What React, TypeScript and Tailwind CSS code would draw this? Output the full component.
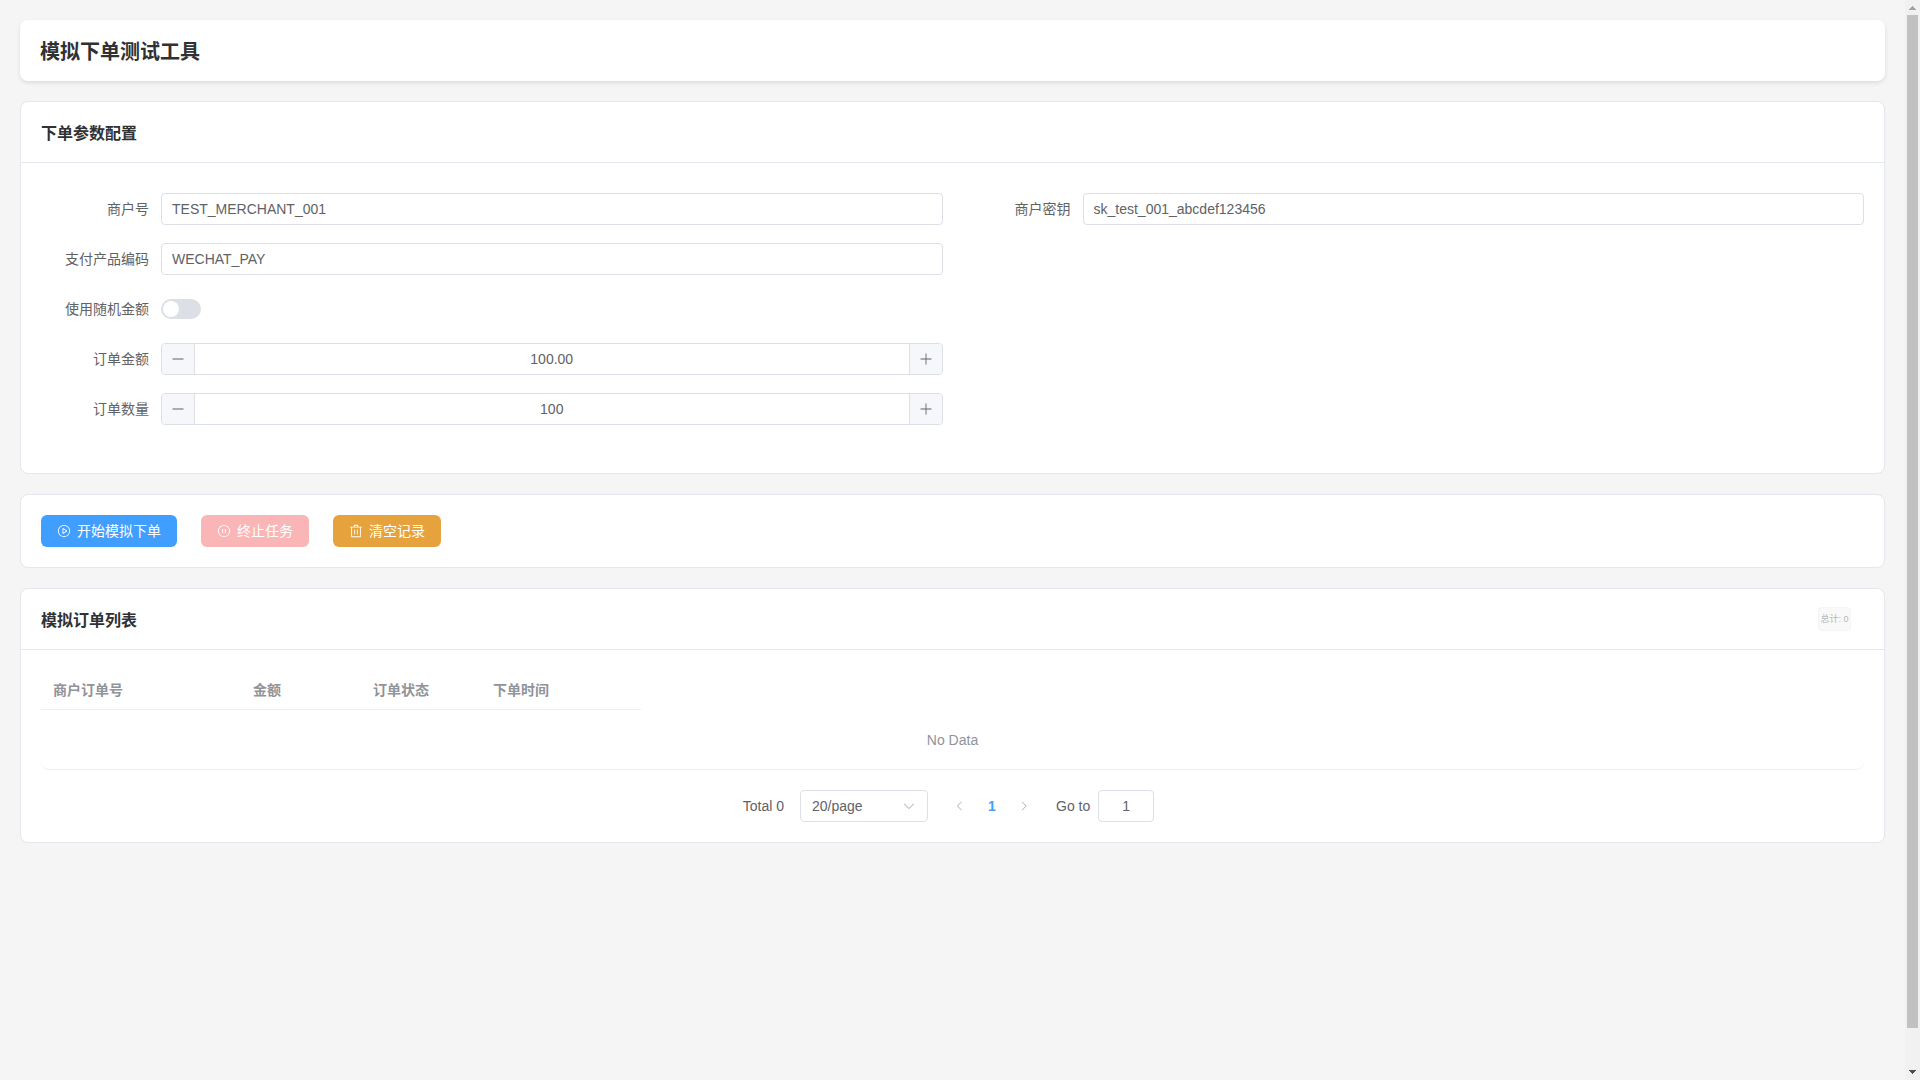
import { useState, type ReactNode } from "react";

const card = "rounded-lg border border-[#e4e7ed] bg-white";

function Icon({ children, className = "size-[14px]" }: { children: ReactNode; className?: string }) {
  return (
    <svg viewBox="0 0 1024 1024" fill="currentColor" className={className} aria-hidden="true">
      {children}
    </svg>
  );
}

const MinusIcon = () => (
  <Icon><path d="M128 544h768a32 32 0 1 0 0-64H128a32 32 0 0 0 0 64" /></Icon>
);
const PlusIcon = () => (
  <Icon><path d="M480 480V128a32 32 0 0 1 64 0v352h352a32 32 0 1 1 0 64H544v352a32 32 0 1 1-64 0V544H128a32 32 0 0 1 0-64z" /></Icon>
);
const PlayIcon = () => (
  <Icon><path d="M512 64a448 448 0 1 1 0 896 448 448 0 0 1 0-896m0 832a384 384 0 0 0 0-768 384 384 0 0 0 0 768m-48-247.616L668.608 512 464 375.616zm10.624-342.656 249.472 166.336a48 48 0 0 1 0 79.872L474.624 718.272A48 48 0 0 1 400 678.336V345.6a48 48 0 0 1 74.624-39.936z" /></Icon>
);
const PauseIcon = () => (
  <Icon><path d="M512 64a448 448 0 1 1 0 896 448 448 0 0 1 0-896m0 832a384 384 0 0 0 0-768 384 384 0 0 0 0 768m-96-544q32 0 32 32v256q0 32-32 32t-32-32V384q0-32 32-32m192 0q32 0 32 32v256q0 32-32 32t-32-32V384q0-32 32-32" /></Icon>
);
const DeleteIcon = () => (
  <Icon><path d="M160 256H96a32 32 0 0 1 0-64h256V95.936a32 32 0 0 1 32-32h256a32 32 0 0 1 32 32V192h256a32 32 0 1 1 0 64h-64v672a32 32 0 0 1-32 32H192a32 32 0 0 1-32-32zm448-64v-64H416v64zM224 896h576V256H224zm192-128a32 32 0 0 1-32-32V416a32 32 0 0 1 64 0v320a32 32 0 0 1-32 32m192 0a32 32 0 0 1-32-32V416a32 32 0 0 1 64 0v320a32 32 0 0 1-32 32" /></Icon>
);
const ArrowLeftIcon = () => (
  <Icon className="size-3"><path d="M609.408 149.376 277.76 489.6a32 32 0 0 0 0 44.672l331.648 340.352a29.12 29.12 0 0 0 41.728 0 30.592 30.592 0 0 0 0-42.752L339.264 511.936l311.872-319.872a30.592 30.592 0 0 0 0-42.688 29.12 29.12 0 0 0-41.728 0" /></Icon>
);
const ArrowRightIcon = () => (
  <Icon className="size-3"><path d="M340.864 149.312a30.592 30.592 0 0 0 0 42.752L652.736 512 340.864 831.872a30.592 30.592 0 0 0 0 42.752 29.12 29.12 0 0 0 41.728 0L714.24 534.336a32 32 0 0 0 0-44.672L382.592 149.376a29.12 29.12 0 0 0-41.728 0z" /></Icon>
);
const ArrowDownIcon = () => (
  <Icon className="pointer-events-none absolute top-[9px] right-3 size-[14px] text-[#a8abb2]"><path d="M831.872 340.864 512 652.672 192.128 340.864a30.592 30.592 0 0 0-42.752 0 29.12 29.12 0 0 0 0 41.6L489.664 714.24a32 32 0 0 0 44.672 0l340.288-331.712a29.12 29.12 0 0 0 0-41.728 30.592 30.592 0 0 0-42.752 0z" /></Icon>
);

function Field({ id, label, children }: { id: string; label: string; children: ReactNode }) {
  return (
    <div className="flex">
      <label htmlFor={id} className="w-[120px] shrink-0 pr-3 text-right leading-8">{label}</label>
      <div className="flex h-8 min-w-0 flex-1 items-center">{children}</div>
    </div>
  );
}

function TextField({ id, label, value }: { id: string; label: string; value: string }) {
  return (
    <Field id={id} label={label}>
      <input id={id} type="text" defaultValue={value} className="h-8 w-full rounded border border-[#dcdfe6] bg-white px-[10px] outline-none focus:border-[#409eff]" />
    </Field>
  );
}

function NumberField({ id, label, initial, digits }: { id: string; label: string; initial: number; digits: number }) {
  const [value, setValue] = useState(initial);
  return (
    <Field id={id} label={label}>
      <div className="flex h-8 w-full overflow-hidden rounded border border-[#dcdfe6]">
        <button type="button" aria-label="减少" onClick={() => setValue(value - 1)} className="box-content flex w-8 shrink-0 items-center justify-center border-r border-[#dcdfe6] bg-[#f5f7fa]"><MinusIcon /></button>
        <input id={id} type="text" readOnly value={value.toFixed(digits)} className="min-w-0 flex-1 text-center outline-none" />
        <button type="button" aria-label="增加" onClick={() => setValue(value + 1)} className="box-content flex w-8 shrink-0 items-center justify-center border-l border-[#dcdfe6] bg-[#f5f7fa]"><PlusIcon /></button>
      </div>
    </Field>
  );
}

function CardHeader({ title, children }: { title: string; children?: ReactNode }) {
  return (
    <div className="flex h-[61px] items-center justify-between border-b border-[#e4e7ed] px-5">
      <h2 className="pt-1 text-base font-bold text-[#303133]">{title}</h2>
      {children}
    </div>
  );
}

function ScrollBar() {
  return (
    <div aria-hidden="true" className="flex w-[15px] shrink-0 flex-col bg-[#f1f1f1]">
      <svg viewBox="0 0 15 15" shapeRendering="crispEdges" className="size-[15px] shrink-0 fill-[#a3a3a3]">
        <path d="M7 6h1v1h1v1h1v1h1v1H4V9h1V8h1V7h1z" />
      </svg>
      <div className="min-h-0 flex-1 px-[2px]">
        <div className="h-[96.5%] bg-[#c1c1c1]" />
      </div>
      <svg viewBox="0 0 15 15" shapeRendering="crispEdges" className="size-[15px] shrink-0 fill-[#505050]">
        <path d="M4 5h7v1h-1v1H9v1H8v1H7V8H6V7H5V6H4z" />
      </svg>
    </div>
  );
}

const button = "flex h-8 items-center gap-[6px] rounded-md px-4 text-white";
const headCell = "h-10 border-b border-[#ebeef5] px-3 font-bold";

export default function App() {
  return (
    <div className="flex h-screen bg-[#f5f5f5] font-['Liberation_Sans','Noto_Sans_CJK_SC',sans-serif] text-sm text-[#606266]">
      <main className="flex min-w-0 flex-1 flex-col gap-5 overflow-y-auto p-5">
        <header className="rounded-lg bg-white px-5 pt-5 pb-[17px] shadow-[0_2px_4px_rgba(0,0,0,0.1)]">
          <h1 className="text-xl leading-6 font-bold text-[#303133]">模拟下单测试工具</h1>
        </header>

        <section className={card}>
          <CardHeader title="下单参数配置" />
          <form className="grid grid-cols-2 gap-x-5 gap-y-[18px] px-5 pt-[30px] pb-12">
            <TextField id="merchant" label="商户号" value="TEST_MERCHANT_001" />
            <TextField id="secret" label="商户密钥" value="sk_test_001_abcdef123456" />
            <div className="col-start-1"><TextField id="product" label="支付产品编码" value="WECHAT_PAY" /></div>
            <div className="col-start-1">
              <Field id="random" label="使用随机金额">
                <input id="random" type="checkbox" role="switch" className="flex h-5 w-10 appearance-none items-center rounded-full bg-[#dcdfe6] px-[2px] before:size-4 before:rounded-full before:bg-white before:content-[''] checked:justify-end checked:bg-[#409eff]" />
              </Field>
            </div>
            <div className="col-start-1"><NumberField id="amount" label="订单金额" initial={100} digits={2} /></div>
            <div className="col-start-1"><NumberField id="count" label="订单数量" initial={100} digits={0} /></div>
          </form>
        </section>

        <section className={`${card} flex gap-6 p-5`}>
          <button type="button" className={`${button} bg-[#409eff]`}><PlayIcon />开始模拟下单</button>
          <button type="button" disabled className={`${button} bg-[#fab6b6]`}><PauseIcon />终止任务</button>
          <button type="button" className={`${button} bg-[#e6a23c]`}><DeleteIcon />清空记录</button>
        </section>

        <section className={card}>
          <CardHeader title="模拟订单列表">
            <span className="mr-[13px] flex h-6 w-[33px] items-center justify-center rounded border border-[#f4f4f5] bg-[#f9f9f9] text-[9px] whitespace-nowrap text-[#b4b6ba]">总计: 0</span>
          </CardHeader>
          <div className="p-5">
            <table className="table-fixed border-separate border-spacing-0 text-left text-[#909399]">
              <thead>
                <tr>
                  <th className={`${headCell} w-[200px]`}>商户订单号</th>
                  <th className={`${headCell} w-[120px]`}>金额</th>
                  <th className={`${headCell} w-[120px]`}>订单状态</th>
                  <th className={`${headCell} w-[160px]`}>下单时间</th>
                </tr>
              </thead>
            </table>
            <div className="flex h-[60px] items-center justify-center rounded-b-lg border-b border-[#ebeef5] text-[#909399]">No Data</div>
            <nav aria-label="分页" className="mt-5 flex items-center justify-center pr-2">
              <span className="mr-4">Total 0</span>
              <div className="relative mr-4">
                <select aria-label="每页条数" className="h-8 w-32 appearance-none rounded border border-[#dcdfe6] bg-white px-[11px] outline-none">
                  <option>20/page</option>
                  <option>50/page</option>
                </select>
                <ArrowDownIcon />
              </div>
              <button type="button" disabled aria-label="上一页" className="flex size-8 items-center justify-center text-[#a8abb2]"><ArrowLeftIcon /></button>
              <button type="button" aria-current="page" className="size-8 font-bold text-[#409eff]">1</button>
              <button type="button" disabled aria-label="下一页" className="mr-4 flex size-8 items-center justify-center text-[#a8abb2]"><ArrowRightIcon /></button>
              <label htmlFor="goto" className="mr-2">Go to</label>
              <input id="goto" type="text" defaultValue="1" className="h-8 w-14 rounded border border-[#dcdfe6] text-center outline-none" />
            </nav>
          </div>
        </section>
      </main>
      <ScrollBar />
    </div>
  );
}
